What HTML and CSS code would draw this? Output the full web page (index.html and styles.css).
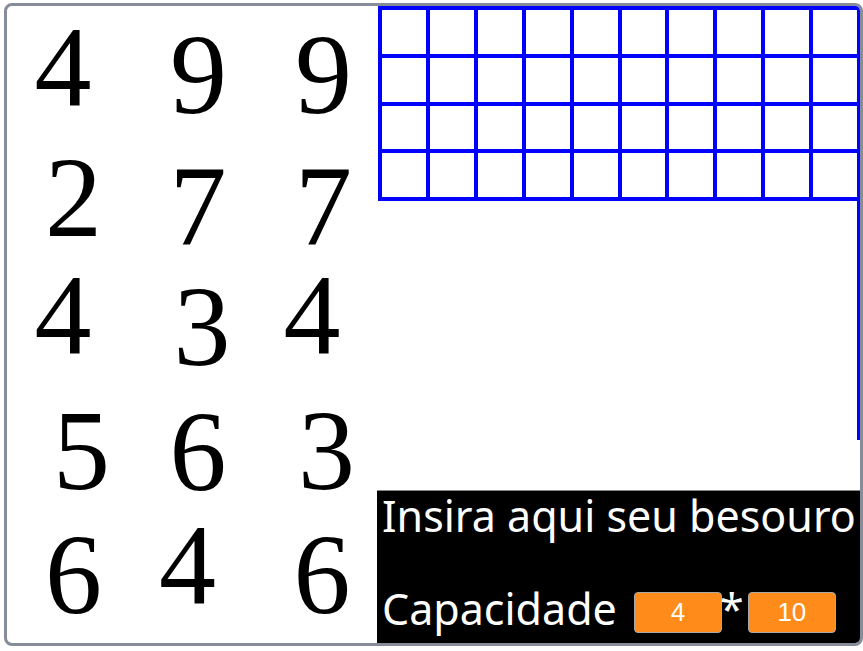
FILE: index.html
```html
<!DOCTYPE html>
<html>
<head>
<meta charset="utf-8">
<link rel="stylesheet" href="styles.css">
</head>
<body>
<div class="frame">
  <div class="board">
    <div class="cell"><span class="digit" style="transform:translate(-6.5px,-2px)">4</span></div>
    <div class="cell"><span class="digit" style="transform:translate(4px,5px)">9</span></div>
    <div class="cell"><span class="digit" style="transform:translate(4px,5px)">9</span></div>
    <div class="cell"><span class="digit" style="transform:translate(4px,2px)">2</span></div>
    <div class="cell"><span class="digit" style="transform:translate(3.5px,10px)">7</span></div>
    <div class="cell"><span class="digit" style="transform:translate(4px,10px)">7</span></div>
    <div class="cell"><span class="digit" style="transform:translate(-6.5px,-6px)">4</span></div>
    <div class="cell"><span class="digit" style="transform:translate(7.5px,4.5px)">3</span></div>
    <div class="cell"><span class="digit" style="transform:translate(-7.5px,-6px)">4</span></div>
    <div class="cell"><span class="digit" style="transform:translate(12px,2.5px)">5</span></div>
    <div class="cell"><span class="digit" style="transform:translate(3.5px,3.5px)">6</span></div>
    <div class="cell"><span class="digit" style="transform:translate(7px,2.5px)">3</span></div>
    <div class="cell"><span class="digit" style="transform:translate(4px,1px)">6</span></div>
    <div class="cell"><span class="digit" style="transform:translate(-7px,-8.5px)">4</span></div>
    <div class="cell"><span class="digit" style="transform:translate(2.5px,1px)">6</span></div>
  </div>
  <div class="side">
    <div class="field">
      <div class="grid">
        <div class="sq"></div><div class="sq"></div><div class="sq"></div><div class="sq"></div><div class="sq"></div>
        <div class="sq"></div><div class="sq"></div><div class="sq"></div><div class="sq"></div><div class="sq"></div>
        <div class="sq"></div><div class="sq"></div><div class="sq"></div><div class="sq"></div><div class="sq"></div>
        <div class="sq"></div><div class="sq"></div><div class="sq"></div><div class="sq"></div><div class="sq"></div>
        <div class="sq"></div><div class="sq"></div><div class="sq"></div><div class="sq"></div><div class="sq"></div>
        <div class="sq"></div><div class="sq"></div><div class="sq"></div><div class="sq"></div><div class="sq"></div>
        <div class="sq"></div><div class="sq"></div><div class="sq"></div><div class="sq"></div><div class="sq"></div>
        <div class="sq"></div><div class="sq"></div><div class="sq"></div><div class="sq"></div><div class="sq"></div>
      </div>
    </div>
    <div class="panel">
      <div class="title">Insira aqui seu besouro</div>
      <div class="cap"><span class="label">Capacidade</span><span class="box first">4</span><span class="star">*</span><span class="box second">10</span></div>
    </div>
  </div>
</div>
</body>
</html>
```
FILE: styles.css
```css
html, body {
  margin: 0;
  padding: 0;
  background: #ffffff;
}
.frame {
  box-sizing: border-box;
  margin: 3px 0 0 4px;
  width: 859px;
  height: 643px;
  border: 3px solid #858c9a;
  border-radius: 8px;
  overflow: hidden;
  display: flex;
  background: #ffffff;
}
.board {
  width: 370px;
  flex: none;
  display: grid;
  grid-template-columns: repeat(3, 125px);
  grid-template-rows: repeat(5, 126px);
  padding-top: 1px;
  box-sizing: border-box;
}
.cell {
  display: flex;
  align-items: center;
  justify-content: center;
}
.digit {
  display: block;
  font-family: "Liberation Serif", serif;
  font-size: 114px;
  line-height: 1;
  color: #000;
}
.side {
  width: 483px;
  flex: none;
  display: flex;
  flex-direction: column;
}
.field {
  height: 434px;
  padding-left: 1px;
  border-right: 3px solid #0000ff;
  flex: none;
}
.grid {
  box-sizing: border-box;
  width: 479px;
  height: 195px;
  background: #0000ff;
  padding: 4px 0 4px 4px;
  display: grid;
  grid-template-columns: repeat(10, 1fr);
  grid-template-rows: repeat(4, 1fr);
  gap: 4px;
}
.sq {
  background: #ffffff;
}
.panel {
  margin-top: 50px;
  flex: 1;
  background: #000;
  border-top: 1px solid #888;
  color: #fff;
  font-family: "Noto Sans", sans-serif;
  font-size: 43px;
  padding: 0 0 9px 5px;
  display: flex;
  flex-direction: column;
  justify-content: space-between;
}
.title {
  line-height: 50px;
  white-space: nowrap;
}
.cap {
  line-height: 50px;
  height: 50px;
  display: flex;
  align-items: flex-start;
  white-space: nowrap;
}
.box {
  box-sizing: border-box;
  display: block;
  width: 88px;
  height: 41px;
  margin-top: 8px;
  background: #ff8c1a;
  border: 1px solid #a9a9a9;
  border-radius: 4px;
  font-family: "Liberation Sans", Arial, sans-serif;
  font-size: 26px;
  line-height: 39px;
  text-align: center;
  color: #fff;
}
.box.first {
  margin-left: 17px;
}
.star {
  margin-left: -2px;
  width: 28px;
}
```
